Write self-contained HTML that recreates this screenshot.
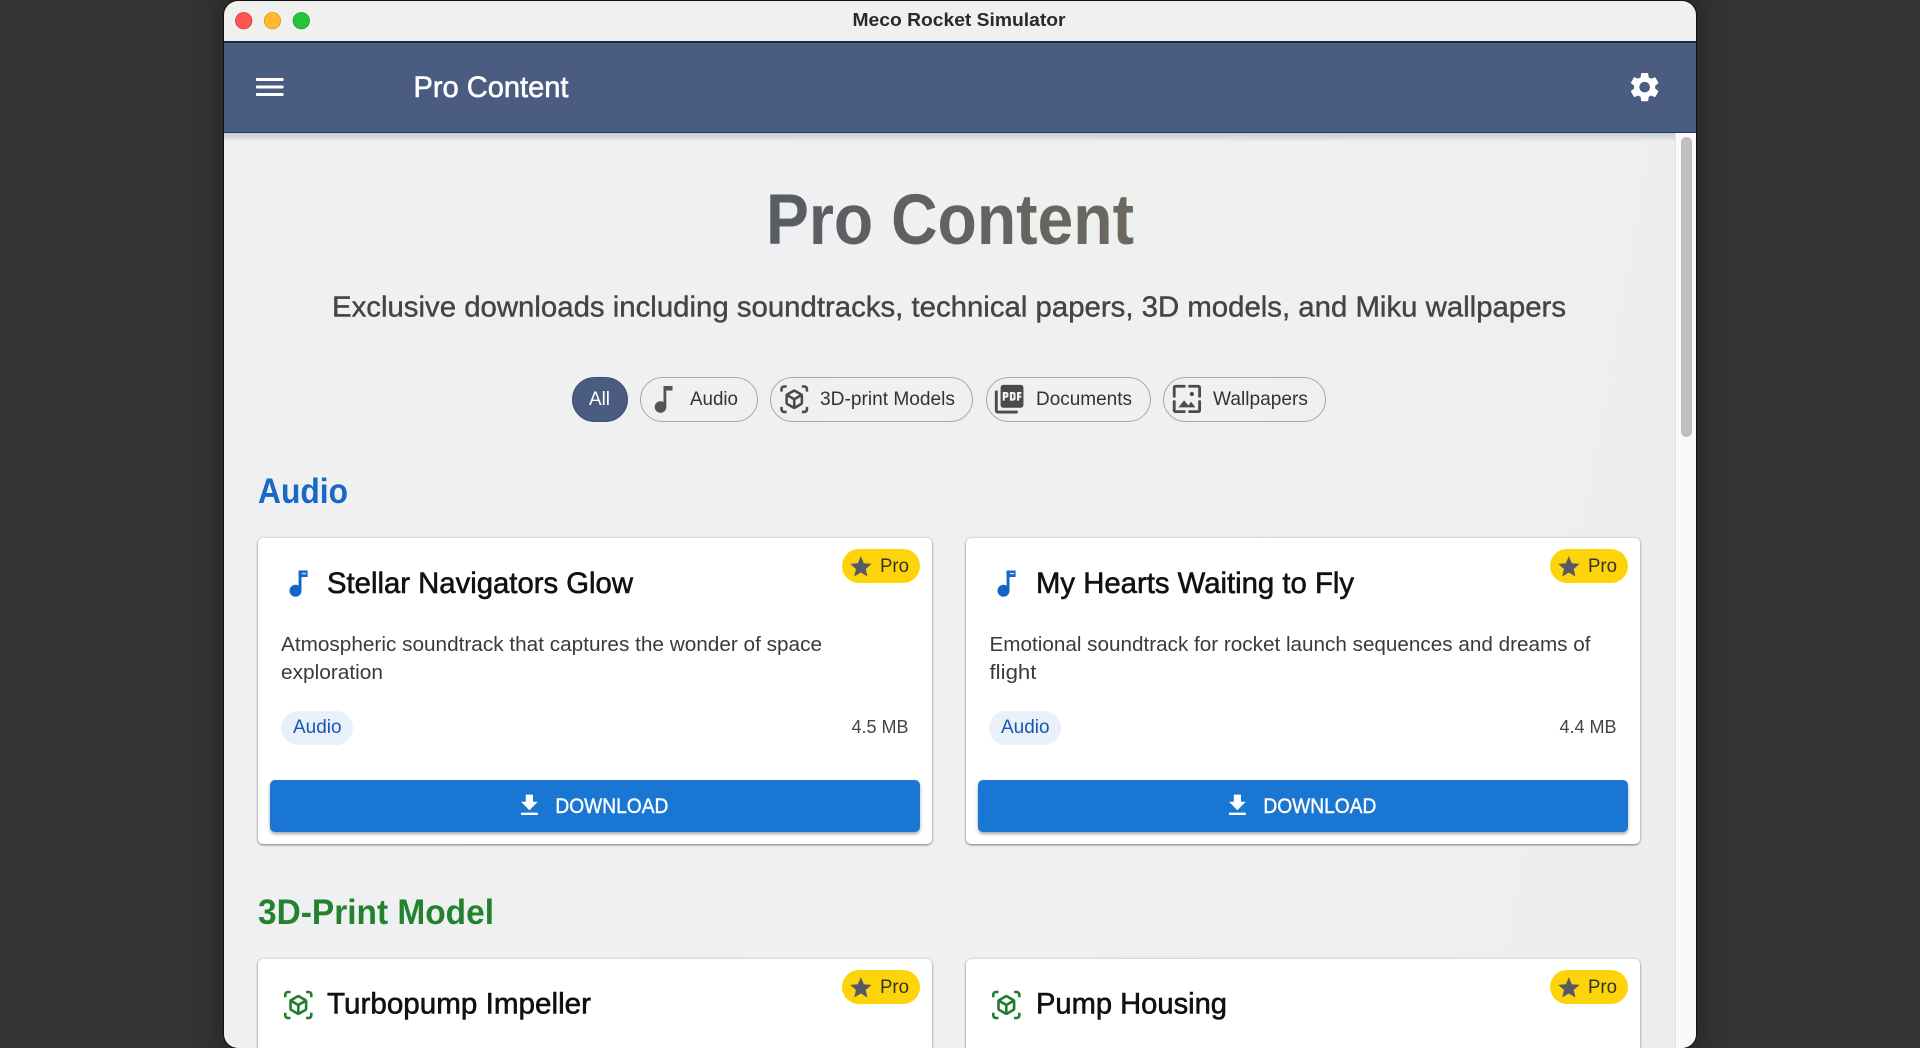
<!DOCTYPE html>
<html lang="en">
<head>
<meta charset="utf-8">
<title>Meco Rocket Simulator - Pro Content</title>
<style>
html,body{margin:0;padding:0;width:1920px;height:1048px;overflow:hidden;background:#333;font-family:"Liberation Sans",sans-serif}
#page{position:relative;width:1920px;height:1048px;overflow:hidden;background:#333}
.abs,.card,.btn,.badge,.tag,.chip,svg.i{position:absolute}
#win{position:absolute;left:224px;top:1px;width:1472px;height:1047px;border-radius:14px;overflow:hidden;box-shadow:0 0 0 1px #111,0 0 22px 6px rgba(0,0,0,.28)}
.card{width:674px;background:#fff;border-radius:5px;box-shadow:0 1px 2px rgba(0,0,0,.45),0 0 3px rgba(0,0,0,.12)}
.btn{left:270px;top:780px;width:650px;height:52px;background:#1976d2;border-radius:5px;box-shadow:0 2px 3px rgba(0,0,0,.35)}
.badge{width:78px;height:34px;border-radius:17px;background:#fdd409}
.tag{width:72px;height:34px;border-radius:17px;background:#e9f0f9}
.chip{top:377px;height:45px;box-sizing:border-box;border:1px solid #a9a9a9;border-radius:23px;background:#f0f0ef}
svg.i{overflow:visible}
text{font-family:"Liberation Sans",sans-serif}
.m{stroke-width:.6px}
.s{stroke-width:.4px}
</style>
</head>
<body>
<div id="page">
<div id="win">
  <div class="abs" style="left:0;top:0;width:1472px;height:40px;background:#f0f0ee"></div>
  <div class="abs" style="left:0;top:132px;width:1472px;height:915px;background:linear-gradient(100deg,#eef0f2 0%,#eff0f0 55%,#efeeec 100%)"></div>
  <div class="abs" style="left:0;top:40px;width:1472px;height:92px;box-sizing:border-box;background:#4a5d80;border-top:2px solid #14284c;border-bottom:1px solid #22385e"></div>
  <div class="abs" style="left:0;top:132px;width:1451px;height:9px;background:linear-gradient(#c7c9cd,rgba(238,239,240,0))"></div>
  <div class="abs" style="left:1451px;top:132px;width:21px;height:915px;box-sizing:border-box;background:#fafafa;border-left:1px solid #e2e2e2"></div>
  <div class="abs" style="left:1457px;top:136px;width:11px;height:300px;border-radius:6px;background:#bfbfbf"></div>
</div>

<div class="card" style="left:258px;top:538px;height:306px"></div>
<div class="card" style="left:966px;top:538px;height:306px"></div>
<div class="card" style="left:258px;top:959px;height:89px;border-radius:5px 5px 0 0"></div>
<div class="card" style="left:966px;top:959px;height:89px;border-radius:5px 5px 0 0"></div>

<div class="btn"></div>
<div class="btn" style="left:978px"></div>
<div class="badge" style="left:842px;top:549px"></div>
<div class="badge" style="left:1550px;top:549px"></div>
<div class="badge" style="left:842px;top:970px"></div>
<div class="badge" style="left:1550px;top:970px"></div>
<div class="tag" style="left:281px;top:711px"></div>
<div class="tag" style="left:989px;top:711px"></div>

<div class="chip" style="left:572px;width:56px;background:#4a5d80;border-color:#3d4f70"></div>
<div class="chip" style="left:640px;width:118px"></div>
<div class="chip" style="left:770px;width:203px"></div>
<div class="chip" style="left:986px;width:165px"></div>
<div class="chip" style="left:1163px;width:163px"></div>

<svg class="i" style="left:0;top:0" width="1920" height="1048" viewBox="0 0 1920 1048">
  <defs>
    <linearGradient id="hg" x1="768" x2="1133" y1="0" y2="0" gradientUnits="userSpaceOnUse">
      <stop offset="0" stop-color="#595c64"/><stop offset="1" stop-color="#6d685f"/>
    </linearGradient>
    <path id="ar" d="M3 4c0-.55.45-1 1-1h2V1H4C2.34 1 1 2.34 1 4v2h2V4zm0 16v-2H1v2c0 1.66 1.34 3 3 3h2v-2H4c-.55 0-1-.45-1-1zM20 1h-2v2h2c.55 0 1 .45 1 1v2h2V4c0-1.66-1.34-3-3-3zm1 19c0 .55-.45 1-1 1h-2v2h2c1.66 0 3-1.34 3-3v-2h-2v2zm-2-5.13V9.13c0-.72-.38-1.38-1-1.73l-5-2.88c-.31-.18-.65-.27-1-.27s-.69.09-1 .27L6 7.39c-.62.36-1 1.02-1 1.74v5.74c0 .72.38 1.38 1 1.73l5 2.88c.31.18.65.27 1 .27s.69-.09 1-.27l5-2.88c.62-.35 1-1.01 1-1.73zm-8 2.3l-4-2.3v-4.63l4 2.33v4.6zm1-6.33L8.04 8.53 12 6.25l3.96 2.28L12 10.84zm5 4.03l-4 2.3v-4.6l4-2.33v4.63z"/>
    <path id="star" d="M12 17.27L18.18 21l-1.64-7.03L22 9.24l-7.19-.61L12 2 9.19 8.63 2 9.24l5.46 4.73L5.82 21z"/>
    <path id="dl" d="M19 9h-4V3H9v6H5l7 7 7-7zM5 18v2h14v-2H5z"/>
    <g id="bnote" fill="#1565c8">
      <circle cx="5.9" cy="20.3" r="6"/>
      <rect x="9" y="0" width="2.9" height="20.3"/>
      <rect x="9" y="0" width="9" height="6.5"/>
      <rect x="12.2" y="2.4" width="4.3" height="1.3" fill="#cfe0f5"/>
    </g>
  </defs>

  <!-- traffic lights -->
  <circle cx="243.7" cy="20.7" r="8.2" fill="#fe5552" stroke="#d83a38" stroke-width=".8"/>
  <circle cx="272.4" cy="20.7" r="8.2" fill="#feb92e" stroke="#d89a22" stroke-width=".8"/>
  <circle cx="301.3" cy="20.7" r="8.2" fill="#26c23e" stroke="#1ca030" stroke-width=".8"/>
  <text x="852.5" y="26" font-size="18" font-weight="700" fill="#2a2a2a" textLength="213" lengthAdjust="spacingAndGlyphs">Meco Rocket Simulator</text>

  <!-- app bar -->
  <rect x="256" y="78" width="27.5" height="3" rx=".7" fill="#fff"/>
  <rect x="256" y="85.5" width="27.5" height="3" rx=".7" fill="#fff"/>
  <rect x="256" y="93" width="27.5" height="3" rx=".7" fill="#fff"/>
  <text class="m" x="413.5" y="97" font-size="30" fill="#fff" stroke="#fff" textLength="155" lengthAdjust="spacingAndGlyphs">Pro Content</text>
  <g transform="translate(1627 69.5) scale(1.47)" fill="#fff"><path d="M19.14 12.94c.04-.3.06-.61.06-.94 0-.32-.02-.64-.07-.94l2.03-1.58c.18-.14.23-.41.12-.61l-1.92-3.32c-.12-.22-.37-.29-.59-.22l-2.39.96c-.5-.38-1.03-.7-1.62-.94l-.36-2.54c-.04-.24-.24-.41-.48-.41h-3.84c-.24 0-.43.17-.47.41l-.36 2.54c-.59.24-1.13.57-1.62.94l-2.39-.96c-.22-.08-.47 0-.59.22L2.74 8.87c-.12.21-.08.47.12.61l2.03 1.58c-.05.3-.09.63-.09.94s.02.64.07.94l-2.03 1.58c-.18.14-.23.41-.12.61l1.92 3.32c.12.22.37.29.59.22l2.39-.96c.5.38 1.03.7 1.62.94l.36 2.54c.05.24.24.41.48.41h3.84c.24 0 .44-.17.47-.41l.36-2.54c.59-.24 1.13-.56 1.62-.94l2.39.96c.22.08.47 0 .59-.22l1.92-3.32c.12-.22.07-.47-.12-.61l-2.01-1.58zM12 15.6c-1.98 0-3.6-1.62-3.6-3.6s1.62-3.6 3.6-3.6 3.6 1.62 3.6 3.6-1.62 3.6-3.6 3.6z"/></g>

  <!-- hero -->
  <text x="766" y="244" font-size="71" font-weight="700" fill="url(#hg)" textLength="368" lengthAdjust="spacingAndGlyphs">Pro Content</text>
  <text class="s" x="332" y="316.5" font-size="29" fill="#444" stroke="#444" textLength="1234" lengthAdjust="spacingAndGlyphs">Exclusive downloads including soundtracks, technical papers, 3D models, and Miku wallpapers</text>

  <!-- filter chips -->
  <text x="589" y="405" font-size="19.5" fill="#fff" textLength="21" lengthAdjust="spacingAndGlyphs">All</text>
  <g fill="#555">
    <circle cx="660.5" cy="407" r="5.8"/>
    <rect x="663.5" y="386" width="2.8" height="21"/>
    <rect x="663.5" y="386" width="9" height="4.5"/>
  </g>
  <text x="690" y="405" font-size="19.5" fill="#333" textLength="48" lengthAdjust="spacingAndGlyphs">Audio</text>
  <use href="#ar" transform="translate(779 384) scale(1.27)" fill="#4a4a4a"/>
  <text x="820" y="405" font-size="19.5" fill="#333" textLength="135" lengthAdjust="spacingAndGlyphs">3D-print Models</text>
  <g transform="translate(992 382) scale(1.43)" fill="#4a4a4a"><path d="M20 2H8c-1.1 0-2 .9-2 2v12c0 1.1.9 2 2 2h12c1.1 0 2-.9 2-2V4c0-1.1-.9-2-2-2zm-8.5 7.5c0 .83-.67 1.5-1.5 1.5H9v2H7.5V7H10c.83 0 1.5.67 1.5 1.5v1zm5 2c0 .83-.67 1.5-1.5 1.5h-2.5V7H15c.83 0 1.5.67 1.5 1.5v3zm4-3H19v1h1.5V11H19v2h-1.5V7h3v1.5zM9 9.5h1v-1H9v1zM4 6H2v14c0 1.1.9 2 2 2h14v-2H4V6zm10 5.5h1v-3h-1v3z"/></g>
  <text x="1036" y="405" font-size="19.5" fill="#333" textLength="96" lengthAdjust="spacingAndGlyphs">Documents</text>
  <g transform="translate(1170 382) scale(1.41)" fill="#4a4a4a"><path d="M4 4h7V2H4c-1.1 0-2 .9-2 2v7h2V4zm6 9l-4 5h12l-3-4-2.03 2.71L10 13zm7-4.5c0-.83-.67-1.5-1.5-1.5S14 7.67 14 8.5s.67 1.5 1.5 1.5S17 9.33 17 8.5zM20 2h-7v2h7v7h2V4c0-1.1-.9-2-2-2zm0 18h-7v2h7c1.1 0 2-.9 2-2v-7h-2v7zM4 13H2v7c0 1.1.9 2 2 2h7v-2H4v-7z"/></g>
  <text x="1213" y="405" font-size="19.5" fill="#333" textLength="95" lengthAdjust="spacingAndGlyphs">Wallpapers</text>

  <!-- section headings -->
  <text x="258" y="503" font-size="35" font-weight="700" fill="#1a68c6" textLength="90" lengthAdjust="spacingAndGlyphs">Audio</text>
  <text x="258" y="924" font-size="35" font-weight="700" fill="#23822f" textLength="236" lengthAdjust="spacingAndGlyphs">3D-Print Model</text>

  <!-- card 1 -->
  <use href="#bnote" transform="translate(289.6 570.5)"/>
  <text class="m" x="327" y="593" font-size="30" fill="#111" stroke="#111" textLength="306" lengthAdjust="spacingAndGlyphs">Stellar Navigators Glow</text>
  <use href="#star" transform="translate(848 554) scale(1.07)" fill="#565a66"/>
  <text x="880" y="572" font-size="19.5" fill="#333" textLength="29" lengthAdjust="spacingAndGlyphs">Pro</text>
  <text x="281" y="651" font-size="20.5" fill="#3a3a3a" textLength="541" lengthAdjust="spacingAndGlyphs">Atmospheric soundtrack that captures the wonder of space</text>
  <text x="281" y="679" font-size="20.5" fill="#3a3a3a" textLength="102" lengthAdjust="spacingAndGlyphs">exploration</text>
  <text x="293" y="733" font-size="19.5" fill="#1557b0" textLength="48.5" lengthAdjust="spacingAndGlyphs">Audio</text>
  <text x="851.5" y="733" font-size="18.5" fill="#444" textLength="57" lengthAdjust="spacingAndGlyphs">4.5 MB</text>
  <use href="#dl" transform="translate(515 791) scale(1.2)" fill="#fff"/>
  <text class="s" x="555.4" y="813" font-size="20.8" fill="#fff" stroke="#fff" textLength="113" lengthAdjust="spacingAndGlyphs">DOWNLOAD</text>

  <!-- card 2 -->
  <use href="#bnote" transform="translate(997.6 570.5)"/>
  <text class="m" x="1036" y="593" font-size="30" fill="#111" stroke="#111" textLength="318" lengthAdjust="spacingAndGlyphs">My Hearts Waiting to Fly</text>
  <use href="#star" transform="translate(1556 554) scale(1.07)" fill="#565a66"/>
  <text x="1588" y="572" font-size="19.5" fill="#333" textLength="29" lengthAdjust="spacingAndGlyphs">Pro</text>
  <text x="989.5" y="651" font-size="20.5" fill="#3a3a3a" textLength="601" lengthAdjust="spacingAndGlyphs">Emotional soundtrack for rocket launch sequences and dreams of</text>
  <text x="989.5" y="679" font-size="20.5" fill="#3a3a3a" textLength="47" lengthAdjust="spacingAndGlyphs">flight</text>
  <text x="1001" y="733" font-size="19.5" fill="#1557b0" textLength="48.5" lengthAdjust="spacingAndGlyphs">Audio</text>
  <text x="1559.5" y="733" font-size="18.5" fill="#444" textLength="57" lengthAdjust="spacingAndGlyphs">4.4 MB</text>
  <use href="#dl" transform="translate(1223 791) scale(1.2)" fill="#fff"/>
  <text class="s" x="1263.4" y="813" font-size="20.8" fill="#fff" stroke="#fff" textLength="113" lengthAdjust="spacingAndGlyphs">DOWNLOAD</text>

  <!-- card 3 -->
  <use href="#ar" transform="translate(282.7 989.4) scale(1.3)" fill="#1f7d2c"/>
  <text class="m" x="327" y="1013.5" font-size="30" fill="#111" stroke="#111" textLength="264" lengthAdjust="spacingAndGlyphs">Turbopump Impeller</text>
  <use href="#star" transform="translate(848 975) scale(1.07)" fill="#565a66"/>
  <text x="880" y="993" font-size="19.5" fill="#333" textLength="29" lengthAdjust="spacingAndGlyphs">Pro</text>

  <!-- card 4 -->
  <use href="#ar" transform="translate(990.7 989.4) scale(1.3)" fill="#1f7d2c"/>
  <text class="m" x="1036" y="1013.5" font-size="30" fill="#111" stroke="#111" textLength="191" lengthAdjust="spacingAndGlyphs">Pump Housing</text>
  <use href="#star" transform="translate(1556 975) scale(1.07)" fill="#565a66"/>
  <text x="1588" y="993" font-size="19.5" fill="#333" textLength="29" lengthAdjust="spacingAndGlyphs">Pro</text>
</svg>
</div>
</body>
</html>
